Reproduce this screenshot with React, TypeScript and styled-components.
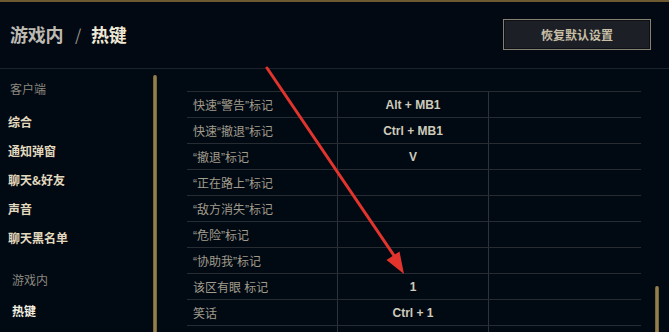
import React from "react";
import styled, { createGlobalStyle } from "styled-components";

const Global = createGlobalStyle`
  html, body { margin: 0; padding: 0; background: #010a13; }
  body { font-family: "Noto Sans CJK SC", "Noto Sans", sans-serif; }
`;

const Root = styled.div`
  position: relative;
  width: 669px;
  height: 332px;
  overflow: hidden;
  background: #010a13;
  border-top: 2px solid #6e5a32;
  box-sizing: border-box;
  display: flex;
  flex-direction: column;
`;

const Header = styled.div`
  height: 66px;
  flex: none;
  display: flex;
  align-items: center;
  justify-content: space-between;
  padding: 0 18px 0 10px;
  background: #030912;
  border-bottom: 1px solid #1c2229;
`;

const Title = styled.div`
  font-size: 18px;
  font-weight: 700;
  color: #bdbab2;
  letter-spacing: -0.3px;
  display: flex;
  align-items: center;
  margin-top: -2px;
`;

const Slash = styled.span`
  margin: 0 10px 0 12px;
  font-weight: 400;
  font-size: 16px;
  color: #9a978f;
`;

const Strong = styled.span`
  color: #efe8d6;
`;

const ResetButton = styled.button`
  width: 148px;
  height: 31px;
  margin-top: -2px;
  background: #1c2026;
  border: 1px solid #85806f;
  box-shadow: inset 0 0 0 1px #0d1015;
  color: #c8bfa6;
  font-family: "Noto Sans CJK SC", sans-serif;
  font-size: 12px;
  font-weight: 700;
  padding: 0;
`;

const Body = styled.div`
  flex: 1;
  display: flex;
  min-height: 0;
`;

const Sidebar = styled.div`
  width: 153px;
  flex: none;
  padding-top: 12px;
  box-sizing: border-box;
  display: flex;
  flex-direction: column;
`;

const SectionLabel = styled.div<{ $top: number; $indent?: number }>`
  margin-top: ${(p) => p.$top}px;
  margin-bottom: ${(p) => (p.$top ? 8 : 10)}px;
  padding-left: ${(p) => p.$indent ?? 10}px;
  font-size: 12px;
  line-height: 16px;
  color: #8b887f;
`;

const NavItem = styled.div<{ $active?: boolean; $indent?: number }>`
  height: 29px;
  line-height: 29px;
  padding-left: ${(p) => p.$indent ?? 8}px;
  font-size: 12px;
  font-weight: 700;
  color: ${(p) => (p.$active ? "#f4efe2" : "#e2d9bf")};
`;

const Thumb = styled.div<{ $top: number }>`
  width: 4px;
  flex: none;
  margin-top: ${(p) => p.$top}px;
  background: linear-gradient(90deg, #6d5a32, #a08a55 50%, #6d5a32);
  border-radius: 2px 2px 0 0;
`;

const Main = styled.div`
  flex: none;
  width: 498px;
  padding: 22px 0 0 30px;
  box-sizing: border-box;
  display: flex;
`;

const Table = styled.div`
  width: 454px;
  display: flex;
  flex-direction: column;
`;

const Row = styled.div`
  height: 26px;
  box-sizing: border-box;
  border-top: 1px solid #272b32;
  display: grid;
  grid-template-columns: 151px 151px 152px;
  flex: none;
`;

const Cell = styled.div<{ $center?: boolean; $divider?: boolean }>`
  display: flex;
  align-items: center;
  justify-content: ${(p) => (p.$center ? "center" : "flex-start")};
  padding-left: ${(p) => (p.$center ? 0 : 6)}px;
  border-right: ${(p) => (p.$divider ? "1px solid #2e333a" : "none")};
  font-family: "Liberation Sans", "Noto Sans CJK SC", sans-serif;
  font-size: 12px;
  color: #a19c8d;
  white-space: nowrap;
`;

const Key = styled.span`
  font-family: "Liberation Sans", Arial, sans-serif;
  font-weight: 700;
  font-size: 12px;
  color: #cfcabb;
`;

const Arrow = styled.svg`
  position: absolute;
  left: 0;
  top: 0;
  pointer-events: none;
`;

const rows: [string, string][] = [
  ["快速“警告”标记", "Alt + MB1"],
  ["快速“撤退”标记", "Ctrl + MB1"],
  ["“撤退”标记", "V"],
  ["“正在路上”标记", ""],
  ["“敌方消失”标记", ""],
  ["“危险”标记", ""],
  ["“协助我”标记", ""],
  ["该区有眼 标记", "1"],
  ["笑话", "Ctrl + 1"],
  ["", ""],
];

export default function App() {
  return (
    <Root>
      <Global />
      <Header>
        <Title>
          游戏内<Slash>/</Slash>
          <Strong>热键</Strong>
        </Title>
        <ResetButton>恢复默认设置</ResetButton>
      </Header>
      <Body>
        <Sidebar>
          <SectionLabel $top={0}>客户端</SectionLabel>
          <NavItem>综合</NavItem>
          <NavItem>通知弹窗</NavItem>
          <NavItem>聊天&amp;好友</NavItem>
          <NavItem>声音</NavItem>
          <NavItem>聊天黑名单</NavItem>
          <SectionLabel $top={20} $indent={12}>
            游戏内
          </SectionLabel>
          <NavItem $active $indent={12}>
            热键
          </NavItem>
        </Sidebar>
        <Thumb $top={6} />
        <Main>
          <Table>
            {rows.map(([label, key], i) => (
              <Row key={i}>
                <Cell $divider>{label}</Cell>
                <Cell $center $divider>
                  <Key>{key}</Key>
                </Cell>
                <Cell />
              </Row>
            ))}
          </Table>
        </Main>
        <Thumb $top={217} />
      </Body>
      <Arrow width="669" height="332" viewBox="0 0 669 332">
        <line x1="267" y1="66" x2="395" y2="255" stroke="#e2342c" strokeWidth="3" strokeLinecap="round" />
        <polygon points="404,272 386.5,258 399.5,249.5" fill="#e2342c" />
      </Arrow>
    </Root>
  );
}
